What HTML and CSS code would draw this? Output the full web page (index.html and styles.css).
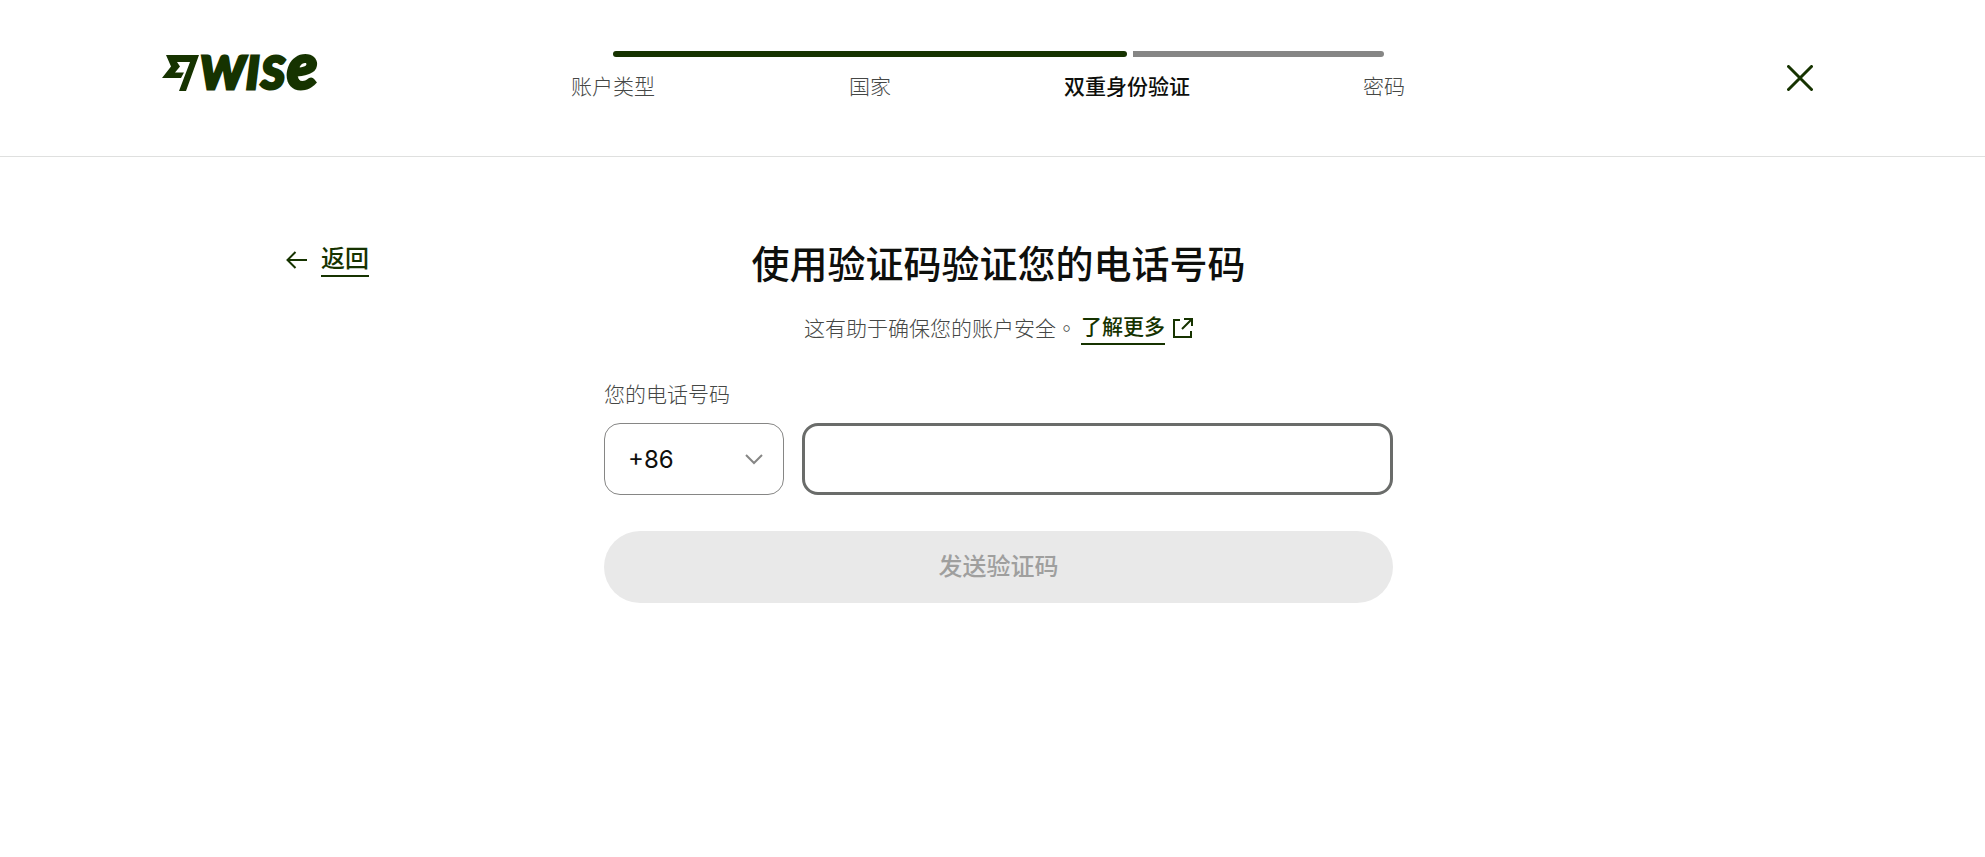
FILE: index.html
```html
<!DOCTYPE html>
<html lang="zh-CN">

<head>
    <meta charset="UTF-8">
    <meta name="viewport" content="width=device-width, initial-scale=1">
    <title>双重身份验证 - Wise</title>

    <link rel="stylesheet" href="styles.css">

</head>

<body>

    <header class="header">
        <a class="logo" href="#" aria-label="Wise">
            <svg width="158" height="38" viewBox="0 0 158 38">
                <path d="M4 1H37L24 37H17L28 8H15L18 12.5L13 18.5H22L19 24H0L9 12.5Z" />
                <g class="wordmark">
                    <text x="38" y="35">W</text>
                    <text x="84" y="35">I</text>
                    <text x="99" y="35">S</text>
                    <text class="wordmark-e" x="125" y="35">e</text>
                </g>
            </svg>
        </a>

        <nav class="stepper" aria-label="注册进度">
            <div class="progress">
                <div class="progress-done"></div>
                <div class="progress-left"></div>
            </div>
            <ol class="steps">
                <li>账户类型</li>
                <li>国家</li>
                <li class="active" aria-current="step">双重身份验证</li>
                <li>密码</li>
            </ol>
        </nav>

        <button class="close" type="button" aria-label="关闭">
            <svg width="26" height="26" viewBox="0 0 26 26">
                <path d="M1.5 1.5L24.5 24.5M24.5 1.5L1.5 24.5" />
            </svg>
        </button>
    </header>

    <main class="content">
        <a class="back" href="#">
            <svg width="22" height="18" viewBox="0 0 22 18">
                <path d="M21 9H2M9.5 1L1.5 9L9.5 17" />
            </svg>
            <span class="link-text">返回</span>
        </a>

        <div class="panel">
            <h1>使用验证码验证您的电话号码</h1>
            <p class="intro">
                <span>这有助于确保您的账户安全<span class="stop" lang="zh-TW">。</span></span>
                <a class="more" href="#">
                    <span class="link-text">了解更多</span>
                    <svg width="20" height="20" viewBox="0 0 20 20">
                        <path d="M7 2H1V19H18V13M11 1H19V8M19 1L9 11" />
                    </svg>
                </a>
            </p>

            <form class="phone-form">
                <label for="phone">您的电话号码</label>
                <div class="phone-row">
                    <div class="code">
                        <select id="code" name="code" aria-label="国家代码">
                            <option>+86</option>
                        </select>
                        <svg class="chevron" width="18" height="11" viewBox="0 0 18 11">
                            <path d="M1 1L9 9L17 1" />
                        </svg>
                    </div>
                    <input type="tel" id="phone" name="phone">
                </div>
                <button class="submit" type="submit" disabled>发送验证码</button>
            </form>
        </div>
    </main>

</body>

</html>
```
FILE: styles.css
```css
* {
    box-sizing: border-box;
}

body {
    margin: 0;
    background-color: #fff;
    color: #0e0f0c;
    font-family: Inter, "Noto Sans CJK SC", sans-serif;
    font-size: 21px;
    line-height: 32px;
}

a {
    color: #163300;
    font-weight: 500;
    text-decoration: none;
}

svg {
    display: block;
    flex-shrink: 0;
    fill: none;
    stroke: #163300;
    stroke-width: 2;
}

/* Header */
.header {
    display: grid;
    grid-template-columns: 1fr minmax(0, 771px) 1fr;
    height: 157px;
    padding: 0 150px 0 162px;
    border-bottom: 1px solid #dfe0df;
}

.logo {
    justify-self: start;
    padding-top: 54px;
}

.logo svg {
    overflow: visible;
    fill: #163300;
    stroke: none;
}

.wordmark {
    font-family: Lato, sans-serif;
    font-size: 46px;
    font-style: italic;
    font-weight: 900;
    stroke: #163300;
    stroke-width: 3;
}

.wordmark-e {
    font-size: 62px;
}

.stepper {
    padding-top: 51px;
}

.progress {
    display: grid;
    grid-template-columns: 2fr 1fr;
}

.progress-done {
    height: 6px;
    border-radius: 3px;
    background-color: #163300;
}

.progress-left {
    height: 6px;
    margin-left: 6px;
    border-radius: 0 3px 3px 0;
    background-color: #868685;
}

.steps {
    display: flex;
    justify-content: space-between;
    margin: 14px 0 0;
    padding: 0;
    list-style: none;
    color: #454745;
    font-weight: 300;
}

/* zero width keeps each name centred on its point of the bar */
.steps li {
    display: flex;
    justify-content: center;
    width: 0;
    white-space: nowrap;
}

.steps .active {
    color: #0e0f0c;
    font-weight: 500;
}

.close {
    justify-self: end;
    align-self: center;
    width: 70px;
    height: 48px;
    padding: 0 22px;
    border: none;
    background: none;
    cursor: pointer;
}

.close svg {
    stroke-linecap: round;
    stroke-width: 3;
}

/* Content */
.content {
    display: grid;
    grid-template-columns: 1fr minmax(0, 789px) 1fr;
    align-items: start;
    padding: 82px 274px 0 286px;
}

.back {
    display: flex;
    align-items: center;
    justify-self: start;
    gap: 13px;
    margin-top: 4px;
    font-family: Inter, "Noto Sans CJK TC", sans-serif;
    font-size: 24px;
}

.link-text {
    border-bottom: 2px solid #163300;
}

.panel h1 {
    margin: 0;
    font-size: 38px;
    font-weight: 500;
    line-height: 50px;
    text-align: center;
}

.intro {
    display: flex;
    justify-content: center;
    gap: 4px;
    margin: 22px 0 0;
    color: #454745;
    font-weight: 300;
}

.stop {
    font-family: "Noto Sans CJK TC", sans-serif;
}

.more {
    display: flex;
    align-items: center;
    gap: 8px;
}

.phone-form {
    margin-top: 34px;
}

.phone-form label {
    display: block;
    color: #454745;
    font-weight: 300;
}

.phone-row {
    display: flex;
    gap: 18px;
    margin-top: 12px;
}

.code {
    position: relative;
    width: 180px;
}

select,
input {
    width: 100%;
    height: 72px;
    padding: 0 23px;
    background-color: #fff;
    color: #0e0f0c;
    font-family: inherit;
    font-size: 24px;
}

select {
    appearance: none;
    border: 1px solid #868685;
    border-radius: 16px;
}

input {
    flex: 1;
    border: 3px solid #6a6c6a;
    border-radius: 16px;
    outline: none;
}

.chevron {
    position: absolute;
    top: 31px;
    right: 21px;
    stroke: #868685;
    pointer-events: none;
}

.submit {
    display: block;
    width: 100%;
    height: 72px;
    margin-top: 36px;
    padding-bottom: 6px;
    border: none;
    border-radius: 36px;
    background-color: #e9e9e9;
    color: #9f9f9e;
    font-family: inherit;
    font-size: 24px;
    font-weight: 500;
}
```
